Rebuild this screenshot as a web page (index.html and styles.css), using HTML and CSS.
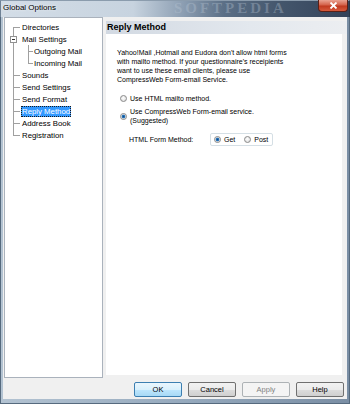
FILE: index.html
```html
<!DOCTYPE html>
<html>
<head>
<meta charset="utf-8">
<title>Global Options</title>
<link rel="stylesheet" href="styles.css">
</head>
<body>
<div class="window">
  <div class="titlebar">
    <span class="title">Global Options</span>
    <span class="watermark">SOFTPEDIA</span>
    <span class="close"><svg width="9" height="7" viewBox="0 0 9 7"><path d="M1.5 0.5 L7.5 6.5 M7.5 0.5 L1.5 6.5" stroke="#fff" stroke-width="1.8" fill="none"/></svg></span>
  </div>
  <div class="frame">
    <div class="client">
      <div class="main">
        <div class="tree">
          <div class="row"><span class="ind first"></span><span class="label">Directories</span></div>
          <div class="row"><span class="ind pipe"><span class="box"></span></span><span class="label">Mail Settings</span></div>
          <div class="row"><span class="ind pipe"></span><span class="ind2 tee2"></span><span class="label">Outgoing Mail</span></div>
          <div class="row"><span class="ind pipe"></span><span class="ind2 last2"></span><span class="label">Incoming Mail</span></div>
          <div class="row"><span class="ind tee"></span><span class="label">Sounds</span></div>
          <div class="row"><span class="ind tee"></span><span class="label">Send Settings</span></div>
          <div class="row"><span class="ind tee"></span><span class="label">Send Format</span></div>
          <div class="row"><span class="ind tee"></span><span class="label selected">Reply Method</span></div>
          <div class="row"><span class="ind tee"></span><span class="label">Address Book</span></div>
          <div class="row"><span class="ind last"></span><span class="label">Registration</span></div>
        </div>
        <div class="side">
          <div class="head">Reply Method</div>
          <div class="panel">
            <p class="msg">Yahoo!Mail ,Hotmail and Eudora don't allow html forms<br>with mailto method. If your questionnaire's receipients<br>want to use these email clients, please use<br>CompressWeb Form-email Service.</p>
            <div class="opts">
              <div class="opt"><span class="radio"></span><span>Use HTML mailto method.</span></div>
              <div class="opt"><span class="radio on"></span><span>Use CompressWeb Form-email service.<br>(Suggested)</span></div>
            </div>
            <div class="method">
              <span class="method-label">HTML Form Method:</span>
              <div class="group">
                <span class="gopt"><span class="radio on"></span><span>Get</span></span>
                <span class="gopt"><span class="radio"></span><span>Post</span></span>
              </div>
            </div>
          </div>
        </div>
      </div>
      <div class="buttons">
        <button class="btn default">OK</button>
        <button class="btn">Cancel</button>
        <button class="btn disabled">Apply</button>
        <button class="btn">Help</button>
      </div>
    </div>
  </div>
</div>
</body>
</html>
```
FILE: styles.css
```css
* { box-sizing: border-box; }
html, body { margin: 0; padding: 0; }
body {
  width: 350px;
  height: 404px;
  overflow: hidden;
  font-family: "Liberation Sans", Arial, sans-serif;
  color: #000;
}
.window {
  width: 350px;
  height: 404px;
  display: flex;
  flex-direction: column;
  background: linear-gradient(90deg, #b3c3d2, #94a8bc 55%, #7a8ea4);
  box-shadow: inset 0 0 0 1px #566a7e;
}
.titlebar {
  height: 17px;
  flex: none;
  display: flex;
  align-items: flex-start;
  background: linear-gradient(90deg, #d3dde7 0%, #c7d3df 38%, #8d9fb3 52%, #5b6f86 64%, #44566c 80%, #33435a 100%);
  border-top: 1px solid #8b9cad;
  border-left: 1px solid #6f8296;
  border-right: 1px solid #2a3848;
}
.title {
  font-size: 8px;
  line-height: 13px;
  padding-left: 2px;
  text-shadow: 0 0 3px rgba(255, 255, 255, 0.9);
}
.watermark {
  margin-left: 118px;
  font-family: "Liberation Serif", serif;
  font-weight: bold;
  font-size: 15px;
  letter-spacing: 3px;
  line-height: 15px;
  color: rgba(185, 198, 212, 0.35);
}
.close {
  margin-left: auto;
  margin-right: 1px;
  margin-top: -1px;
  width: 30px;
  height: 12px;
  border: 1px solid #5b2016;
  border-top: none;
  border-radius: 0 0 4px 4px;
  background: linear-gradient(#eaa392, #d4624a 45%, #c03a20 55%, #d65a3c);
  display: flex;
  align-items: center;
  justify-content: center;
}
.frame {
  flex: 1;
  display: flex;
  padding: 0 3px 5px 3px;
}
.client {
  flex: 1;
  background: #f0f0f0;
  display: flex;
  flex-direction: column;
  padding: 0 0 2px 1px;
}
.main {
  display: flex;
  gap: 3px;
  height: 361px;
}
.tree {
  width: 99px;
  flex: none;
  border: 1px solid #aab2bc;
  background: #fff;
  padding-top: 3px;
  font-size: 7.8px;
}
.row {
  display: flex;
  align-items: center;
  height: 12px;
  white-space: nowrap;
}
.ind, .ind2 {
  height: 12px;
  flex: none;
  background-repeat: no-repeat;
  display: flex;
  align-items: center;
}
.ind { width: 16px; }
.ind2 { width: 12px; }
.tee {
  background-image: linear-gradient(#a0a0a0, #a0a0a0), linear-gradient(#a0a0a0, #a0a0a0);
  background-size: 1px 12px, 7px 1px;
  background-position: 8px 0, 8px 6px;
}
.first {
  background-image: linear-gradient(#a0a0a0, #a0a0a0), linear-gradient(#a0a0a0, #a0a0a0);
  background-size: 1px 6px, 7px 1px;
  background-position: 8px 6px, 8px 6px;
}
.last {
  background-image: linear-gradient(#a0a0a0, #a0a0a0), linear-gradient(#a0a0a0, #a0a0a0);
  background-size: 1px 7px, 7px 1px;
  background-position: 8px 0, 8px 6px;
}
.pipe {
  background-image: linear-gradient(#a0a0a0, #a0a0a0);
  background-size: 1px 12px;
  background-position: 8px 0;
}
.tee2 {
  background-image: linear-gradient(#a0a0a0, #a0a0a0), linear-gradient(#a0a0a0, #a0a0a0);
  background-size: 1px 12px, 5px 1px;
  background-position: 7px 0, 7px 6px;
}
.last2 {
  background-image: linear-gradient(#a0a0a0, #a0a0a0), linear-gradient(#a0a0a0, #a0a0a0);
  background-size: 1px 7px, 5px 1px;
  background-position: 7px 0, 7px 6px;
}
.box {
  width: 7px;
  height: 7px;
  margin-left: 5px;
  border: 1px solid #919191;
  background: linear-gradient(#333, #333) center / 3px 1px no-repeat, #fff;
}
.label {
  padding: 0 1px;
  line-height: 11px;
}
.label.selected {
  background: #3399ff;
  color: #fff;
  outline: 1px dotted #1a1a1a;
  outline-offset: -1px;
}
.side {
  flex: 1;
  display: flex;
  flex-direction: column;
  padding: 4px 0 3px;
}
.head {
  height: 13px;
  flex: none;
  background: linear-gradient(90deg, #d2d9e2, #e3e8ee 60%, #eceef1);
  font-weight: bold;
  font-size: 9px;
  line-height: 13px;
  padding-left: 1px;
}
.panel {
  flex: 1;
  background: #fff;
  margin-right: 5px;
  font-size: 7px;
  line-height: 9px;
}
.msg {
  margin: 0;
  padding: 14px 0 0 11px;
  white-space: nowrap;
}
.opts {
  margin-top: 10px;
  padding-left: 14px;
  display: flex;
  flex-direction: column;
  gap: 4px;
}
.opt {
  display: flex;
  align-items: center;
  gap: 3px;
}
.radio {
  width: 7px;
  height: 7px;
  flex: none;
  border-radius: 50%;
  border: 1px solid #8a8a8a;
  background: radial-gradient(circle at 45% 40%, #ffffff, #d6d6d6);
}
.radio.on {
  background: radial-gradient(circle, #0e4a86 0, #2f7fc8 1.6px, #e6e6e6 2.2px, #f6f6f6);
}
.method {
  display: flex;
  align-items: center;
  margin-top: 8px;
  padding-left: 23px;
}
.method-label {
  width: 81px;
  flex: none;
}
.group {
  display: flex;
  align-items: center;
  gap: 9px;
  width: 63px;
  height: 13px;
  border: 1px solid #d5dfe5;
  border-radius: 2px;
  padding-left: 3px;
}
.gopt {
  display: flex;
  align-items: center;
  gap: 3px;
}
.buttons {
  display: flex;
  justify-content: flex-end;
  gap: 6px;
  margin-top: 4px;
  padding-right: 3px;
}
.btn {
  width: 48px;
  height: 15px;
  margin: 0;
  padding: 0;
  border: 1px solid #707070;
  border-radius: 2px;
  background: linear-gradient(#f2f2f2 0, #ebebeb 50%, #dddddd 51%, #cfcfcf);
  font-family: "Liberation Sans", Arial, sans-serif;
  font-size: 7.5px;
  line-height: 13px;
  color: #000;
  text-align: center;
}
.btn.default {
  border-color: #3c7fb1;
  background: linear-gradient(#eaf6fd 0, #d9f0fc 50%, #bee6fd 51%, #a7d9f5);
}
.btn.disabled {
  border-color: #adb2b5;
  background: #f4f4f4;
  color: #838383;
}
```
